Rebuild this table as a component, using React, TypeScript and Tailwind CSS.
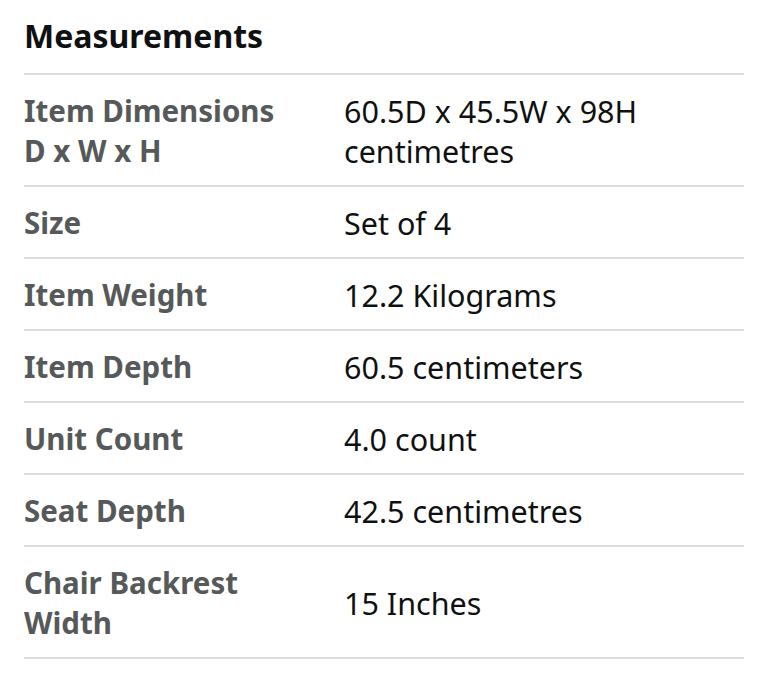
const rows: { label: string; value: string }[] = [
  { label: "Item Dimensions D x W x H", value: "60.5D x 45.5W x 98H centimetres" },
  { label: "Size", value: "Set of 4" },
  { label: "Item Weight", value: "12.2 Kilograms" },
  { label: "Item Depth", value: "60.5 centimeters" },
  { label: "Unit Count", value: "4.0 count" },
  { label: "Seat Depth", value: "42.5 centimetres" },
  { label: "Chair Backrest Width", value: "15 Inches" },
];

export default function App() {
  return (
    <div className="w-[768px] h-[680px] bg-white px-6 pt-[14px] font-['Noto_Sans',sans-serif]">
      <h2 className="text-[32px] font-bold leading-[44px] text-[#0f1111] pb-[15px]">Measurements</h2>
      <div className="w-[720px] border-t-2 border-[#dddddd]">
        {rows.map((r) => (
          <div key={r.label} className="grid grid-cols-[320px_1fr] items-center pt-[16px] pb-[14px] border-b-2 border-[#dddddd]">
            <div className="max-w-[262px] text-[29.5px] leading-[40px] font-bold text-[#565959]">{r.label}</div>
            <div className="text-[30.5px] leading-[40px] text-[#0f1111]">{r.value}</div>
          </div>
        ))}
      </div>
    </div>
  );
}
